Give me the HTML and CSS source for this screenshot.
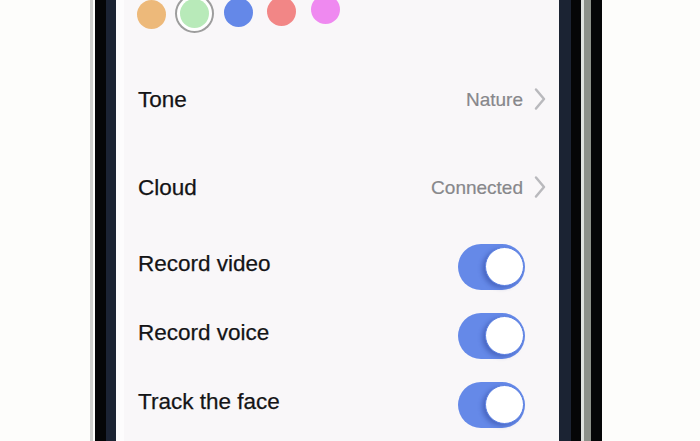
FILE: index.html
```html
<!DOCTYPE html>
<html lang="en">
<head>
    <meta charset="UTF-8">
    <meta name="viewport" content="width=device-width, initial-scale=1.0">
    <title>Camera Settings</title>
    <link rel="stylesheet" href="styles.css">
</head>
<body>

    <div class="phone">
        <div class="frame-left">
            <div class="edge-light"></div>
            <div class="edge-black"></div>
            <div class="edge-navy"></div>
        </div>

        <div class="screen">
            <div class="colors">
                <span class="dot dot-orange"></span>
                <span class="dot dot-green selected"></span>
                <span class="dot dot-blue"></span>
                <span class="dot dot-red"></span>
                <span class="dot dot-pink"></span>
            </div>

            <div class="row row-link">
                <span class="label">Tone</span>
                <span class="value">Nature</span>
                <svg class="chevron" width="14" height="24" viewBox="0 0 14 24">
                    <path d="M3 2.5 L11 12 L3 21.5" fill="none" stroke="#b9b9bd" stroke-width="2.5" stroke-linecap="round" stroke-linejoin="round"/>
                </svg>
            </div>

            <div class="row row-link">
                <span class="label">Cloud</span>
                <span class="value">Connected</span>
                <svg class="chevron" width="14" height="24" viewBox="0 0 14 24">
                    <path d="M3 2.5 L11 12 L3 21.5" fill="none" stroke="#b9b9bd" stroke-width="2.5" stroke-linecap="round" stroke-linejoin="round"/>
                </svg>
            </div>

            <div class="row row-toggle">
                <span class="label">Record video</span>
                <span class="toggle on"><span class="knob"></span></span>
            </div>

            <div class="row row-toggle">
                <span class="label">Record voice</span>
                <span class="toggle on"><span class="knob"></span></span>
            </div>

            <div class="row row-toggle">
                <span class="label">Track the face</span>
                <span class="toggle on"><span class="knob"></span></span>
            </div>
        </div>

        <div class="frame-right">
            <div class="edge-navy narrow"></div>
            <div class="edge-black narrow"></div>
            <div class="edge-shine"></div>
            <div class="edge-steel"></div>
            <div class="edge-black"></div>
        </div>
    </div>

</body>
</html>
```

FILE: styles.css
```css
body {
    margin: 0;
    background-color: #fdfdfb;
    font-family: "Liberation Sans", Arial, sans-serif;
    overflow: hidden;
}

.phone {
    display: flex;
    height: 441px;
    margin-left: 90px;
}

/* Phone body edges */
.frame-left,
.frame-right {
    display: flex;
}

.edge-light {
    width: 3px;
    background-color: #cfd0cd;
    margin-right: 2px;
}

.edge-black {
    width: 11px;
    background-color: #050607;
}

.edge-navy {
    width: 10px;
    background-color: #1b2333;
}

.edge-navy.narrow {
    width: 12px;
}

.edge-black.narrow {
    width: 10px;
}

.edge-shine {
    width: 3px;
    background-color: #dfe3de;
}

.edge-steel {
    width: 7px;
    background-color: #8c9189;
}

/* Screen */
.screen {
    width: 443px;
    background-color: #f9f7f9;
    border-left: 8px solid #fdfcfd;
    box-sizing: border-box;
    padding: 0 12px 0 14px;
    display: flex;
    flex-direction: column;
}

.colors {
    height: 56px;
    display: flex;
    align-items: flex-start;
    gap: 14.5px;
    margin-left: -1.5px;
}

.dot {
    width: 29px;
    height: 29px;
    border-radius: 50%;
    flex-shrink: 0;
}

.dot-orange {
    background-color: #edb97a;
    margin-top: 0;
}

.dot-green {
    background-color: #b8eab9;
    margin-top: -1px;
}

.dot-blue {
    background-color: #6488e8;
    margin-top: -2px;
}

.dot-red {
    background-color: #f28686;
    margin-top: -3px;
}

.dot-pink {
    background-color: #ef89f0;
    margin-top: -5px;
}

.dot.selected {
    box-shadow: 0 0 0 3px #ffffff, 0 0 0 5px #9d9d9d;
}

.row {
    display: flex;
    align-items: center;
}

.row-link {
    height: 88px;
}

.row-toggle {
    height: 69px;
}

.label {
    font-size: 22.5px;
    color: #141416;
    -webkit-text-stroke: 0.25px #141416;
    flex: 1;
}

.row-toggle .label {
    margin-bottom: 5px;
}

.value {
    font-size: 19px;
    color: #87878b;
    -webkit-text-stroke: 0.2px #87878b;
    margin-right: 10px;
}

.chevron {
    display: block;
    margin-top: -2px;
}

/* Switches */
.toggle {
    width: 67px;
    height: 46px;
    border-radius: 23px;
    background-color: #6589e8;
    display: flex;
    align-items: center;
    justify-content: flex-end;
    padding: 0 1px;
    box-sizing: border-box;
    margin-right: 22px;
}

.knob {
    width: 39px;
    height: 39px;
    border-radius: 50%;
    background-color: #ffffff;
    border: 1.5px solid #5b80e2;
    box-sizing: border-box;
    box-shadow: -3px 2px 4px rgba(35, 55, 140, 0.4);
}
```
